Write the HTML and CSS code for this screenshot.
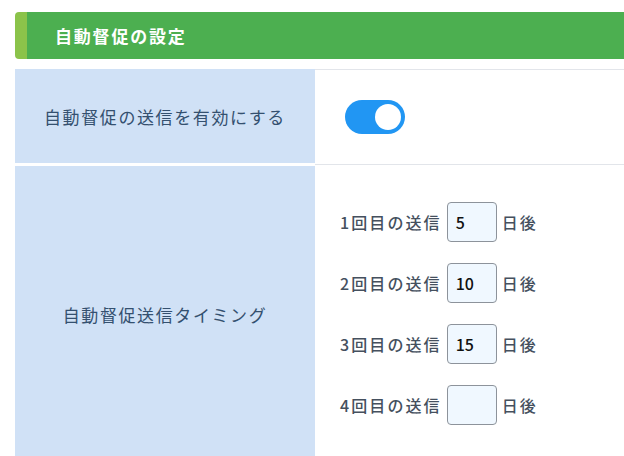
FILE: index.html
```html
<!DOCTYPE html>
<html lang="ja">
<head>
<meta charset="utf-8">
<title>自動督促の設定</title>
<link rel="stylesheet" href="styles.css">
</head>
<body>
<div class="panel">
  <h2 class="heading">自動督促の設定</h2>
  <div class="settings">
    <div class="row row-toggle">
      <div class="label">自動督促の送信を有効にする</div>
      <div class="value value-toggle">
        <span class="switch"><span class="knob"></span></span>
      </div>
    </div>
    <div class="row row-timing">
      <div class="label">自動督促送信タイミング</div>
      <div class="value value-timing">
        <div class="timing"><span class="t-label">1回目の送信</span><span class="box">5</span><span class="t-unit">日後</span></div>
        <div class="timing"><span class="t-label">2回目の送信</span><span class="box">10</span><span class="t-unit">日後</span></div>
        <div class="timing"><span class="t-label">3回目の送信</span><span class="box">15</span><span class="t-unit">日後</span></div>
        <div class="timing"><span class="t-label">4回目の送信</span><span class="box"></span><span class="t-unit">日後</span></div>
      </div>
    </div>
  </div>
</div>
</body>
</html>
```
FILE: styles.css
```css
html {
  overflow: hidden;
}
body {
  margin: 0;
  padding: 12px 0 0 15px;
  font-family: "Noto Sans CJK JP", "Noto Sans", sans-serif;
  background: #ffffff;
}
.panel {
  width: 900px;
}
.heading {
  margin: 0;
  height: 47px;
  display: flex;
  align-items: center;
  padding-left: 28px;
  background: #4caf50;
  border-left: 12px solid #8bc34a;
  border-radius: 4px 0 0 4px;
  color: #ffffff;
  font-size: 17px;
  font-weight: 700;
  letter-spacing: 1.8px;
}
.settings {
  margin-top: 10px;
}
.row {
  display: flex;
}
.label {
  width: 300px;
  flex: none;
  background: #d0e1f6;
  display: flex;
  align-items: center;
  justify-content: center;
  color: #34506f;
  font-size: 17px;
  letter-spacing: 1.6px;
}
.value {
  flex: 1;
  border-top: 1px solid #e2e5ea;
}
.row-toggle .label {
  margin-bottom: 1px;
}
.row-timing .label {
  margin-top: 2px;
}
.value-toggle {
  height: 94px;
  display: flex;
  align-items: center;
  padding-left: 30px;
}
.switch {
  width: 60px;
  height: 34px;
  border-radius: 17px;
  background: #2196f3;
  display: flex;
  align-items: center;
  justify-content: flex-end;
  padding-right: 4px;
  box-sizing: border-box;
}
.knob {
  width: 26px;
  height: 26px;
  border-radius: 50%;
  background: #ffffff;
}
.value-timing {
  padding: 37px 0 38px 25px;
  display: flex;
  flex-direction: column;
  gap: 21px;
}
.timing {
  display: flex;
  align-items: center;
  gap: 5px;
  color: #45505e;
  font-size: 16px;
  font-weight: 500;
  letter-spacing: 2.1px;
}
.box {
  width: 50px;
  height: 40px;
  box-sizing: border-box;
  border: 1px solid #8d939b;
  border-radius: 4px;
  background: #f0f8ff;
  display: flex;
  align-items: center;
  padding-left: 8px;
  color: #111111;
  font-size: 16px;
  font-weight: 500;
  letter-spacing: 0;
}
```
